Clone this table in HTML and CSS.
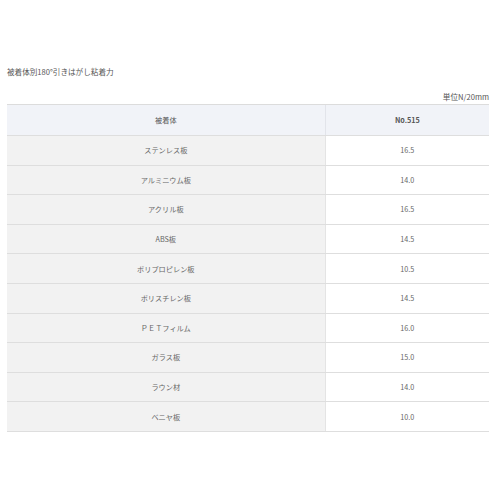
FILE: index.html
```html
<!DOCTYPE html>
<html lang="ja">
<head>
<meta charset="utf-8">
<link rel="stylesheet" href="styles.css">
</head>
<body>
<div class="page">
  <p class="title">被着体別180°引きはがし粘着力</p>
  <p class="unit">単位N/20mm</p>
  <table class="data">
    <thead>
      <tr><th class="c1">被着体</th><th class="c2">No.515</th></tr>
    </thead>
    <tbody>
      <tr><td class="c1">ステンレス板</td><td class="c2">16.5</td></tr>
      <tr><td class="c1">アルミニウム板</td><td class="c2">14.0</td></tr>
      <tr><td class="c1">アクリル板</td><td class="c2">16.5</td></tr>
      <tr><td class="c1">ABS板</td><td class="c2">14.5</td></tr>
      <tr><td class="c1">ポリプロピレン板</td><td class="c2">10.5</td></tr>
      <tr><td class="c1">ポリスチレン板</td><td class="c2">14.5</td></tr>
      <tr><td class="c1">ＰＥＴフィルム</td><td class="c2">16.0</td></tr>
      <tr><td class="c1">ガラス板</td><td class="c2">15.0</td></tr>
      <tr><td class="c1">ラウン材</td><td class="c2">14.0</td></tr>
      <tr><td class="c1">ベニヤ板</td><td class="c2">10.0</td></tr>
    </tbody>
  </table>
</div>
</body>
</html>
```
FILE: styles.css
```css
html, body {
  margin: 0;
  padding: 0;
  background: #ffffff;
}
body {
  font-family: "Noto Sans CJK JP", "Noto Sans", sans-serif;
  color: #666666;
  font-size: 7.2px;
}
.page {
  padding: 66px 11px 0 7px;
}
.title {
  margin: 0;
  line-height: 12px;
  font-size: 7.6px;
  color: #555555;
}
.unit {
  margin: 13px 0 0 0;
  text-align: right;
  line-height: 12px;
  font-size: 7.6px;
  color: #555555;
}
.data {
  width: 100%;
  border-collapse: collapse;
  margin-top: 1px;
}
.data th, .data td {
  text-align: center;
  font-weight: normal;
  padding: 0;
  border-bottom: 1px solid #dedede;
}
.data th {
  height: 30px;
  background: #f1f3f8;
  border-top: 1px solid #dcdcdc;
  color: #555555;
}
.data th.c2 {
  font-weight: bold;
  border-left: 1px solid #e2e4ea;
}
.data td {
  height: 28.6px;
}
.data td.c1 {
  width: 66%;
  background: #f2f2f2;
}
.data td.c2 {
  background: #ffffff;
  border-left: 1px solid #e4e4e4;
}
```
